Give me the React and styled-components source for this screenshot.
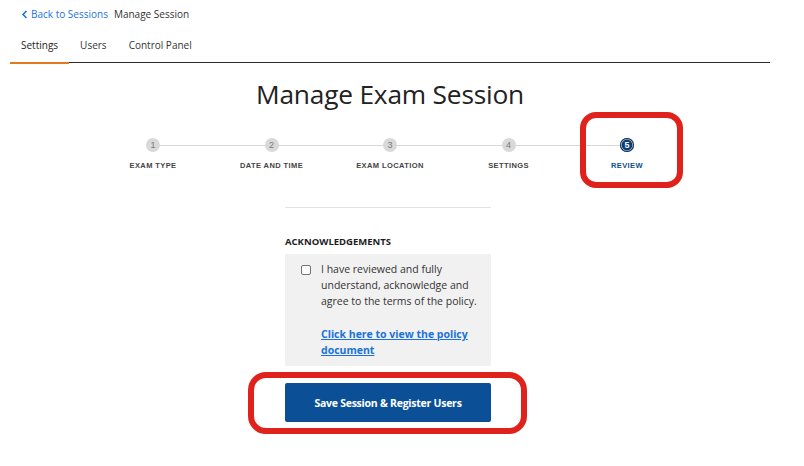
import React from 'react'
import styled, { createGlobalStyle } from 'styled-components'

const GlobalStyle = createGlobalStyle`
  html, body {
    margin: 0;
    padding: 0;
    background: #ffffff;
  }
  body {
    font-family: "Open Sans", "Noto Sans", sans-serif;
    color: #222222;
  }
`

const Page = styled.div`
  width: 760px;
  min-height: 466px;
  padding: 0 34px 0 10px;
`

const Breadcrumb = styled.nav`
  display: flex;
  align-items: center;
  gap: 6px;
  height: 28px;
  padding-left: 11px;
  font-size: 10px;
`

const BackLink = styled.a`
  display: flex;
  align-items: center;
  gap: 3px;
  color: #1a73d9;
  text-decoration: none;
`

const Current = styled.span`
  color: #333333;
`

const Tabs = styled.div`
  display: flex;
  border-bottom: 1.5px solid #2b2b2b;
  height: 34px;
  align-items: stretch;
`

const Tab = styled.div`
  display: flex;
  align-items: center;
  padding: 1px 11px 0 11px;
  font-size: 10px;
  color: ${p => (p.active ? '#1d1d1d' : '#333333')};
  border-bottom: 2px solid ${p => (p.active ? '#e37a22' : 'transparent')};
  margin-bottom: -1.5px;
`

const Title = styled.h1`
  margin: 13px 0 0 0;
  text-align: center;
  font-size: 26.3px;
  font-weight: 400;
  color: #222222;
  letter-spacing: -0.2px;
`

const Stepper = styled.ol`
  list-style: none;
  display: grid;
  grid-template-columns: repeat(5, 118.5px);
  justify-content: center;
  margin: 26px 0 0 0;
  padding: 0;
`

const Step = styled.li`
  position: relative;
  display: flex;
  flex-direction: column;
  align-items: center;

  &::before {
    content: '';
    position: absolute;
    top: 7px;
    left: ${p => (p.first ? '50%' : '0')};
    right: ${p => (p.last ? '50%' : '0')};
    height: 1px;
    background: #d6d6d6;
  }
`

const Dot = styled.span`
  position: relative;
  z-index: 1;
  width: 14px;
  height: 14px;
  border-radius: 50%;
  display: flex;
  align-items: center;
  justify-content: center;
  font-family: "Liberation Sans", Arial, sans-serif;
  font-size: 9px;
  font-weight: ${p => (p.active ? 700 : 400)};
  color: ${p => (p.active ? '#ffffff' : '#7a7a7a')};
  background: ${p => (p.active ? '#0d3d70' : '#d9d9d9')};
  box-shadow: ${p => (p.active ? 'inset 0 0 0 1px #0a2f57, inset 0 0 0 1.6px #c9d5e4' : 'none')};
`

const StepLabel = styled.span`
  margin-top: 9px;
  font-family: "Liberation Sans", Arial, sans-serif;
  font-size: 7.5px;
  font-weight: 700;
  letter-spacing: 0.4px;
  color: ${p => (p.active ? '#0d4f94' : '#444444')};
  text-transform: uppercase;
`

const Highlight = styled.div`
  position: absolute;
  border: 6px solid #e0221c;
  border-radius: 16px;
  pointer-events: none;
`

const StepHighlight = styled(Highlight)`
  top: -26px;
  left: calc(50% - 47px);
  width: 91px;
  height: 64px;
`

const FormColumn = styled.div`
  width: 206px;
  margin: 37px auto 0 auto;
  position: relative;
  left: -2px;
`

const Divider = styled.hr`
  border: 0;
  border-top: 1px solid #e2e2e2;
  margin: 0;
`

const SectionTitle = styled.h2`
  margin: 27px 0 0 0;
  font-size: 9.5px;
  font-weight: 700;
  color: #1d1d1d;
  line-height: 14px;
`

const AckBox = styled.div`
  margin-top: 5px;
  background: #f1f1f1;
  display: flex;
  gap: 10px;
  padding: 7px 10px 8px 16px;
`

const Checkbox = styled.span`
  flex: none;
  margin-top: 4px;
  width: 8px;
  height: 8px;
  border: 1px solid #767676;
  border-radius: 2px;
  background: #ffffff;
`

const AckText = styled.div`
  font-size: 10.5px;
  line-height: 16px;
  color: #333333;

  p {
    margin: 0 0 17px 0;
  }
`

const PolicyLink = styled.a`
  color: #1a73d9;
  font-weight: 700;
  text-decoration: underline;
`

const ButtonWrap = styled.div`
  position: relative;
  margin-top: 17px;
`

const PrimaryButton = styled.button`
  display: block;
  width: 100%;
  height: 39px;
  border: 0;
  border-radius: 2px;
  background: #0b4f96;
  color: #ffffff;
  font-family: "Open Sans", "Noto Sans", sans-serif;
  font-size: 10.5px;
  font-weight: 700;
  letter-spacing: -0.25px;
  cursor: pointer;
`

const ButtonHighlight = styled(Highlight)`
  top: -11px;
  left: -37px;
  right: -36px;
  bottom: -12px;
  border-radius: 18px;
`

const steps = ['Exam Type', 'Date and Time', 'Exam Location', 'Settings', 'Review']

export default function App () {
  return (
    <Page>
      <GlobalStyle />
      <Breadcrumb>
        <BackLink href='#'>
          <svg width='7' height='9' viewBox='0 0 7 9'>
            <path d='M5.5 1 L2 4.5 L5.5 8' fill='none' stroke='#1a73d9' strokeWidth='1.6' />
          </svg>
          Back to Sessions
        </BackLink>
        <Current>Manage Session</Current>
      </Breadcrumb>

      <Tabs>
        <Tab active>Settings</Tab>
        <Tab>Users</Tab>
        <Tab>Control Panel</Tab>
      </Tabs>

      <Title>Manage Exam Session</Title>

      <Stepper>
        {steps.map((s, i) => {
          const active = i === steps.length - 1
          return (
            <Step key={s} first={i === 0} last={active}>
              <Dot active={active}>{i + 1}</Dot>
              <StepLabel active={active}>{s}</StepLabel>
              {active && <StepHighlight />}
            </Step>
          )
        })}
      </Stepper>

      <FormColumn>
        <Divider />
        <SectionTitle>ACKNOWLEDGEMENTS</SectionTitle>
        <AckBox>
          <Checkbox />
          <AckText>
            <p>I have reviewed and fully understand, acknowledge and agree to the terms of the policy.</p>
            <PolicyLink href='#'>Click here to view the policy document</PolicyLink>
          </AckText>
        </AckBox>
        <ButtonWrap>
          <PrimaryButton>Save Session &amp; Register Users</PrimaryButton>
          <ButtonHighlight />
        </ButtonWrap>
      </FormColumn>
    </Page>
  )
}
